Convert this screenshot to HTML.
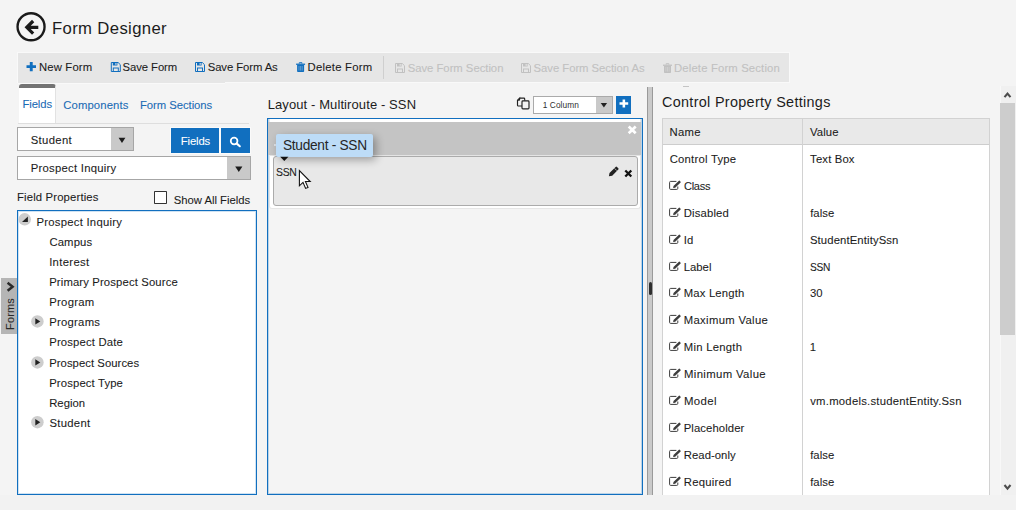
<!DOCTYPE html><html><head><meta charset="utf-8"><title>Form Designer</title><style>
html,body{margin:0;padding:0}
body{width:1016px;height:510px;overflow:hidden;position:relative;background:#f4f4f4;font-family:"Liberation Sans",sans-serif;color:#1c1c1c}
.t{position:absolute;white-space:nowrap;line-height:1;-webkit-text-stroke:0.08px currentColor}
</style></head><body>
<svg style="position:absolute;left:15px;top:11px;overflow:visible" width="33" height="33" viewBox="0 0 33 33" ><g transform="translate(0.000 0.000) scale(1.0000 1.0000)"><circle cx="16.05" cy="15.75" r="13.5" fill="none" stroke="#1a1a1a" stroke-width="2.35"/><path d="M23.3 16.35 H12.5 M18.15 10.0 L11.8 16.35 L18.15 22.7" fill="none" stroke="#1a1a1a" stroke-width="3.2" stroke-linecap="butt" stroke-linejoin="miter"/></g></svg>
<div style="position:absolute;left:18px;top:53px;width:771px;height:29px;background:#e6e6e6;box-shadow:0 0 0 1px rgba(255,255,255,0.45)"></div>
<div style="position:absolute;left:18px;top:82px;width:207px;height:1px;background:#e6e6e6;box-shadow:0 1px 0 0 rgba(255,255,255,0.45)"></div>
<svg style="position:absolute;left:26px;top:62px;overflow:visible" width="11" height="11" viewBox="0 0 11 11" ><g transform="translate(0.500 0.000) scale(1.0000 1.0000)"><path d="M4.75 0 V9.2 M0 4.6 H9.5" stroke="#116fbf" stroke-width="2.9"/></g></svg>
<svg style="position:absolute;left:110px;top:62px;overflow:visible" width="12" height="11" viewBox="0 0 12 11" ><g transform="translate(0.800 0.000) scale(1.0000 1.0000)"><path d="M0.5 0.5 H7.3 L9.5 2.7 V9.5 H0.5 Z" fill="none" stroke="#116fbf" stroke-width="1"/><rect x="2" y="0.5" width="4.6" height="3" fill="#116fbf"/><rect x="4.6" y="1" width="1.1" height="1.8" fill="#e6e6e6"/><rect x="2.5" y="6" width="5" height="3.5" fill="none" stroke="#116fbf" stroke-width="1"/></g></svg>
<svg style="position:absolute;left:195px;top:62px;overflow:visible" width="11" height="11" viewBox="0 0 11 11" ><g transform="translate(0.000 0.000) scale(1.0000 1.0000)"><path d="M0.5 0.5 H7.3 L9.5 2.7 V9.5 H0.5 Z" fill="none" stroke="#116fbf" stroke-width="1"/><rect x="2" y="0.5" width="4.6" height="3" fill="#116fbf"/><rect x="4.6" y="1" width="1.1" height="1.8" fill="#e6e6e6"/><rect x="2.5" y="6" width="5" height="3.5" fill="none" stroke="#116fbf" stroke-width="1"/></g></svg>
<svg style="position:absolute;left:296px;top:62px;overflow:visible" width="11" height="11" viewBox="0 0 11 11" ><g transform="translate(0.100 0.000) scale(1.0000 1.0000)"><path d="M3.2 1.6 V0.6 H5.8 V1.6" fill="none" stroke="#116fbf" stroke-width="0.9"/><rect x="0" y="1.6" width="9" height="1.3" fill="#116fbf"/><path d="M1 2.9 H8 V9.2 Q8 10 7.2 10 H1.8 Q1 10 1 9.2 Z" fill="#116fbf"/><path d="M2.9 4 V8.6 M4.5 4 V8.6 M6.1 4 V8.6" stroke="#e6e6e6" stroke-width="0.55" opacity="0.7"/></g></svg>
<div style="position:absolute;left:383.3px;top:56px;width:1px;height:22.5px;background:#cfcfcf"></div>
<svg style="position:absolute;left:395px;top:63px;overflow:visible" width="11" height="11" viewBox="0 0 11 11" ><g transform="translate(0.000 0.000) scale(1.0000 1.0000)"><path d="M0.5 0.5 H7.3 L9.5 2.7 V9.5 H0.5 Z" fill="none" stroke="#c1c1c1" stroke-width="1"/><rect x="2" y="0.5" width="4.6" height="3" fill="#c1c1c1"/><rect x="4.6" y="1" width="1.1" height="1.8" fill="#e6e6e6"/><rect x="2.5" y="6" width="5" height="3.5" fill="none" stroke="#c1c1c1" stroke-width="1"/></g></svg>
<svg style="position:absolute;left:521px;top:63px;overflow:visible" width="11" height="11" viewBox="0 0 11 11" ><g transform="translate(0.000 0.000) scale(1.0000 1.0000)"><path d="M0.5 0.5 H7.3 L9.5 2.7 V9.5 H0.5 Z" fill="none" stroke="#c1c1c1" stroke-width="1"/><rect x="2" y="0.5" width="4.6" height="3" fill="#c1c1c1"/><rect x="4.6" y="1" width="1.1" height="1.8" fill="#e6e6e6"/><rect x="2.5" y="6" width="5" height="3.5" fill="none" stroke="#c1c1c1" stroke-width="1"/></g></svg>
<svg style="position:absolute;left:663px;top:63px;overflow:visible" width="10" height="11" viewBox="0 0 10 11" ><g transform="translate(0.000 0.000) scale(1.0000 1.0000)"><path d="M3.2 1.6 V0.6 H5.8 V1.6" fill="none" stroke="#c1c1c1" stroke-width="0.9"/><rect x="0" y="1.6" width="9" height="1.3" fill="#c1c1c1"/><path d="M1 2.9 H8 V9.2 Q8 10 7.2 10 H1.8 Q1 10 1 9.2 Z" fill="#c1c1c1"/><path d="M2.9 4 V8.6 M4.5 4 V8.6 M6.1 4 V8.6" stroke="#e6e6e6" stroke-width="0.55" opacity="0.7"/></g></svg>
<div style="position:absolute;left:18px;top:123px;width:231px;height:1px;background:#dedede"></div>
<div style="position:absolute;left:19px;top:84px;width:37px;height:39px;background:#fff;border-top:4px solid #737373;border-radius:3px 3px 0 0;box-sizing:border-box;border-right:1px solid #e2e2e2"></div>
<div style="position:absolute;left:17px;top:127px;width:117px;height:24px;background:#fff;border:1px solid #a6a6a6;box-sizing:border-box"></div>
<div style="position:absolute;left:111px;top:128px;width:22px;height:22px;background:#c9c9c9"></div>
<svg style="position:absolute;left:118px;top:137px;overflow:visible" width="9" height="8" viewBox="0 0 9 8" ><g transform="translate(0.600 0.800) scale(1.0000 1.0000)"><path d="M0 0 H6.8 L3.4 5.2 Z" fill="#1c1c1c"/></g></svg>
<div style="position:absolute;left:171px;top:128px;width:48px;height:25px;background:#116fbf;box-shadow:0 0 0 1px rgba(255,255,255,0.5)"></div>
<div style="position:absolute;left:221px;top:128px;width:29px;height:25px;background:#116fbf;box-shadow:0 0 0 1px rgba(255,255,255,0.5)"></div>
<svg style="position:absolute;left:229px;top:136px;overflow:visible" width="14" height="13" viewBox="0 0 14 13" ><g transform="translate(0.000 0.000) scale(1.0000 1.0000)"><circle cx="5.1" cy="4.9" r="3.35" fill="none" stroke="#fff" stroke-width="1.75"/><path d="M7.8 7.6 L10.8 10.2" stroke="#fff" stroke-width="2.1" stroke-linecap="round"/></g></svg>
<div style="position:absolute;left:17px;top:156px;width:234px;height:24px;background:#fff;border:1px solid #a6a6a6;box-sizing:border-box"></div>
<div style="position:absolute;left:227px;top:157px;width:23px;height:22px;background:#c9c9c9"></div>
<svg style="position:absolute;left:235px;top:166px;overflow:visible" width="9" height="7" viewBox="0 0 9 7" ><g transform="translate(0.200 0.600) scale(1.0000 1.0000)"><path d="M0 0 H7.2 L3.6 5.4 Z" fill="#1c1c1c"/></g></svg>
<div style="position:absolute;left:153.8px;top:191.2px;width:13.2px;height:13.1px;background:#fff;border:1px solid #333;border-radius:0.8px;box-sizing:border-box"></div>
<div style="position:absolute;left:17px;top:210px;width:240px;height:284.6px;background:#fff;border:1px solid #116fbf;box-sizing:border-box;box-shadow:inset 0 0 0 1px rgba(17,111,191,0.2)"></div>
<svg style="position:absolute;left:18px;top:212px;overflow:visible" width="15" height="15" viewBox="0 0 15 15" ><g transform="translate(0.300 0.900) scale(1.0000 1.0000)"><circle cx="6.4" cy="6.4" r="6.25" fill="#cdcdcd"/><path d="M9.6 3.7 V9.0 H3.7 Z" fill="#222"/></g></svg>
<svg style="position:absolute;left:31px;top:315px;overflow:visible" width="14" height="14" viewBox="0 0 14 14" ><g transform="translate(0.000 0.000) scale(1.0000 1.0000)"><circle cx="6.4" cy="6.4" r="6.25" fill="#cdcdcd"/><path d="M4.3 3.2 L9.3 6.4 L4.3 9.6 Z" fill="#222"/></g></svg>
<svg style="position:absolute;left:31px;top:356px;overflow:visible" width="14" height="14" viewBox="0 0 14 14" ><g transform="translate(0.000 0.000) scale(1.0000 1.0000)"><circle cx="6.4" cy="6.4" r="6.25" fill="#cdcdcd"/><path d="M4.3 3.2 L9.3 6.4 L4.3 9.6 Z" fill="#222"/></g></svg>
<svg style="position:absolute;left:31px;top:415px;overflow:visible" width="14" height="15" viewBox="0 0 14 15" ><g transform="translate(0.000 0.800) scale(1.0000 1.0000)"><circle cx="6.4" cy="6.4" r="6.25" fill="#cdcdcd"/><path d="M4.3 3.2 L9.3 6.4 L4.3 9.6 Z" fill="#222"/></g></svg>
<div style="position:absolute;left:1px;top:278.2px;width:16px;height:55.6px;background:#b5b5b5"></div>
<svg style="position:absolute;left:6px;top:281px;overflow:visible" width="10" height="12" viewBox="0 0 10 12" ><g transform="translate(0.000 0.500) scale(1.0000 1.0000)"><path d="M1.6 1.2 L6.6 5.25 L1.6 9.3" fill="none" stroke="#2a2a2a" stroke-width="2.5"/></g></svg>
<svg style="position:absolute;left:517px;top:97px;overflow:visible" width="14" height="14" viewBox="0 0 14 14" ><g transform="translate(0.000 0.400) scale(1.0000 1.0000)"><path d="M2.6 0.7 H6.9 Q7.7 0.7 7.7 1.5 V3.4 M5.0 8.6 H1.3 Q0.5 8.6 0.5 7.8 V2.8 L2.6 0.7 V2.2 Q2.6 2.8 2.0 2.8 H0.6" fill="none" stroke="#222" stroke-width="1.15"/><rect x="5.0" y="3.4" width="7.0" height="8.0" rx="0.9" fill="#f4f4f4" stroke="#222" stroke-width="1.15"/></g></svg>
<div style="position:absolute;left:533px;top:95.9px;width:79.8px;height:17.9px;background:#fff;border:1px solid #aaa;box-sizing:border-box"></div>
<div style="position:absolute;left:596.3px;top:96.9px;width:15.5px;height:15.9px;background:#c9c9c9"></div>
<svg style="position:absolute;left:600px;top:103px;overflow:visible" width="9" height="6" viewBox="0 0 9 6" ><g transform="translate(0.700 0.000) scale(1.0000 1.0000)"><path d="M0 0 H6.4 L3.2 4.5 Z" fill="#222"/></g></svg>
<div style="position:absolute;left:616.1px;top:95.9px;width:14.8px;height:17.9px;background:#116fbf"></div>
<svg style="position:absolute;left:619px;top:99px;overflow:visible" width="11" height="10" viewBox="0 0 11 10" ><g transform="translate(0.500 0.400) scale(1.0000 1.0000)"><path d="M4.35 0 V8.1 M0 4.05 H8.7" stroke="#fff" stroke-width="2.55"/></g></svg>
<div style="position:absolute;left:267px;top:118px;width:376px;height:376.6px;border:1px solid #116fbf;box-sizing:border-box;background:#f4f4f4;box-shadow:inset 0 0 0 1px rgba(17,111,191,0.25)"></div>
<div style="position:absolute;left:269px;top:119.4px;width:372.4px;height:90px;background:#fff;border:1px solid #e6e6e6;border-top:none;border-radius:0 0 3px 3px;box-sizing:border-box"></div>
<div style="position:absolute;left:268px;top:122px;width:373px;height:33px;background:#c4c4c4"></div>
<div style="position:absolute;left:270px;top:155px;width:371px;height:1px;background:#e4e4e4"></div>
<div style="position:absolute;left:273px;top:155.7px;width:365.2px;height:50px;background:#e8e8e8;border:1px solid #ababab;border-radius:3px;box-sizing:border-box"></div>
<svg style="position:absolute;left:627px;top:125px;overflow:visible" width="11" height="11" viewBox="0 0 11 11" ><g transform="translate(0.600 0.500) scale(1.0000 1.0000)"><path d="M1.1 1.0 L8.1 7.8 M8.1 1.0 L1.1 7.8" stroke="#fff" stroke-width="2.7"/></g></svg>
<svg style="position:absolute;left:608px;top:166px;overflow:visible" width="13" height="12" viewBox="0 0 13 12" ><g transform="translate(0.600 0.200) scale(1.0000 1.0000)"><path d="M0.3 10 L0.9 6.8 L7 0.7 Q7.7 0 8.4 0.7 L9.7 2 Q10.4 2.7 9.7 3.4 L3.6 9.5 Z" fill="#222"/><path d="M6 2.2 L8.2 4.4" stroke="#e8e8e8" stroke-width="0.7"/></g></svg>
<svg style="position:absolute;left:624px;top:169px;overflow:visible" width="10" height="10" viewBox="0 0 10 10" ><g transform="translate(0.200 0.400) scale(1.0000 1.0000)"><path d="M1.1 1.1 L7.1 7.1 M7.1 1.1 L1.1 7.1" stroke="#111" stroke-width="2.3"/></g></svg>
<div style="position:absolute;left:274px;top:144px;width:2px;height:2.4px;background:#e9eef3;border-radius:1px"></div>
<div style="position:absolute;left:275.8px;top:134px;width:97.2px;height:22.8px;background:#bddcf7;border-radius:2px;box-shadow:3px 3px 8px rgba(0,0,0,0.32)"></div>
<svg style="position:absolute;left:280px;top:156px;overflow:visible" width="10" height="7" viewBox="0 0 10 7" ><g transform="translate(0.200 0.800) scale(1.0000 1.0000)"><path d="M0 0 H8.2 L4.1 4.2 Z" fill="#111"/></g></svg>
<svg style="position:absolute;left:298px;top:169px;overflow:visible" width="15" height="22" viewBox="0 0 15 22" ><g transform="translate(0.400 0.600) scale(1.0000 1.0000)"><path d="M1 1 V16.2 L4.6 12.8 L7.2 18.8 L9.6 17.8 L7 11.9 H11.8 Z" fill="#fff" stroke="#111" stroke-width="1.1" stroke-linejoin="miter"/></g></svg>
<div style="position:absolute;left:647px;top:87px;width:6px;height:408px;background:#cacaca;border-left:1px solid #9a9a9a;border-right:1px solid #9a9a9a;box-sizing:border-box"></div>
<div style="position:absolute;left:649px;top:282.2px;width:3px;height:12.8px;background:#2e2e2e;border-radius:1.5px"></div>
<div style="position:absolute;left:683px;top:86px;width:6px;height:1px;background:#c4c4c4"></div>
<div style="position:absolute;left:662px;top:118px;width:328px;height:377px;background:#fff;border:1px solid #d2d2d2;border-bottom:none;box-sizing:border-box"></div>
<div style="position:absolute;left:663px;top:119px;width:326px;height:25px;background:#e9e9e9;border-bottom:1px solid #cdcdcd"></div>
<div style="position:absolute;left:802px;top:119px;width:1px;height:376px;background:#d2d2d2"></div>
<svg style="position:absolute;left:669px;top:180px;overflow:visible" width="13" height="11" viewBox="0 0 13 11" ><g transform="translate(0.000 0.500) scale(1.0000 1.0000)"><path d="M7.4 0.9 H1.6 Q0.6 0.9 0.6 1.9 V7.9 Q0.6 8.9 1.6 8.9 H7.8 Q8.8 8.9 8.8 7.9 V6.0" fill="none" stroke="#3d3d3d" stroke-width="1.0"/><path d="M4.1 7.5 L4.5 5.6 L9.9 0.2 Q10.3 -0.1 10.7 0.3 L11.6 1.2 Q11.9 1.6 11.6 2.0 L6.2 7.2 Z" fill="#3d3d3d"/></g></svg>
<svg style="position:absolute;left:669px;top:207px;overflow:visible" width="13" height="11" viewBox="0 0 13 11" ><g transform="translate(0.000 0.500) scale(1.0000 1.0000)"><path d="M7.4 0.9 H1.6 Q0.6 0.9 0.6 1.9 V7.9 Q0.6 8.9 1.6 8.9 H7.8 Q8.8 8.9 8.8 7.9 V6.0" fill="none" stroke="#3d3d3d" stroke-width="1.0"/><path d="M4.1 7.5 L4.5 5.6 L9.9 0.2 Q10.3 -0.1 10.7 0.3 L11.6 1.2 Q11.9 1.6 11.6 2.0 L6.2 7.2 Z" fill="#3d3d3d"/></g></svg>
<svg style="position:absolute;left:669px;top:234px;overflow:visible" width="13" height="11" viewBox="0 0 13 11" ><g transform="translate(0.000 0.500) scale(1.0000 1.0000)"><path d="M7.4 0.9 H1.6 Q0.6 0.9 0.6 1.9 V7.9 Q0.6 8.9 1.6 8.9 H7.8 Q8.8 8.9 8.8 7.9 V6.0" fill="none" stroke="#3d3d3d" stroke-width="1.0"/><path d="M4.1 7.5 L4.5 5.6 L9.9 0.2 Q10.3 -0.1 10.7 0.3 L11.6 1.2 Q11.9 1.6 11.6 2.0 L6.2 7.2 Z" fill="#3d3d3d"/></g></svg>
<svg style="position:absolute;left:669px;top:261px;overflow:visible" width="13" height="11" viewBox="0 0 13 11" ><g transform="translate(0.000 0.500) scale(1.0000 1.0000)"><path d="M7.4 0.9 H1.6 Q0.6 0.9 0.6 1.9 V7.9 Q0.6 8.9 1.6 8.9 H7.8 Q8.8 8.9 8.8 7.9 V6.0" fill="none" stroke="#3d3d3d" stroke-width="1.0"/><path d="M4.1 7.5 L4.5 5.6 L9.9 0.2 Q10.3 -0.1 10.7 0.3 L11.6 1.2 Q11.9 1.6 11.6 2.0 L6.2 7.2 Z" fill="#3d3d3d"/></g></svg>
<svg style="position:absolute;left:669px;top:287px;overflow:visible" width="13" height="11" viewBox="0 0 13 11" ><g transform="translate(0.000 0.500) scale(1.0000 1.0000)"><path d="M7.4 0.9 H1.6 Q0.6 0.9 0.6 1.9 V7.9 Q0.6 8.9 1.6 8.9 H7.8 Q8.8 8.9 8.8 7.9 V6.0" fill="none" stroke="#3d3d3d" stroke-width="1.0"/><path d="M4.1 7.5 L4.5 5.6 L9.9 0.2 Q10.3 -0.1 10.7 0.3 L11.6 1.2 Q11.9 1.6 11.6 2.0 L6.2 7.2 Z" fill="#3d3d3d"/></g></svg>
<svg style="position:absolute;left:669px;top:314px;overflow:visible" width="13" height="11" viewBox="0 0 13 11" ><g transform="translate(0.000 0.500) scale(1.0000 1.0000)"><path d="M7.4 0.9 H1.6 Q0.6 0.9 0.6 1.9 V7.9 Q0.6 8.9 1.6 8.9 H7.8 Q8.8 8.9 8.8 7.9 V6.0" fill="none" stroke="#3d3d3d" stroke-width="1.0"/><path d="M4.1 7.5 L4.5 5.6 L9.9 0.2 Q10.3 -0.1 10.7 0.3 L11.6 1.2 Q11.9 1.6 11.6 2.0 L6.2 7.2 Z" fill="#3d3d3d"/></g></svg>
<svg style="position:absolute;left:669px;top:341px;overflow:visible" width="13" height="11" viewBox="0 0 13 11" ><g transform="translate(0.000 0.500) scale(1.0000 1.0000)"><path d="M7.4 0.9 H1.6 Q0.6 0.9 0.6 1.9 V7.9 Q0.6 8.9 1.6 8.9 H7.8 Q8.8 8.9 8.8 7.9 V6.0" fill="none" stroke="#3d3d3d" stroke-width="1.0"/><path d="M4.1 7.5 L4.5 5.6 L9.9 0.2 Q10.3 -0.1 10.7 0.3 L11.6 1.2 Q11.9 1.6 11.6 2.0 L6.2 7.2 Z" fill="#3d3d3d"/></g></svg>
<svg style="position:absolute;left:669px;top:368px;overflow:visible" width="13" height="11" viewBox="0 0 13 11" ><g transform="translate(0.000 0.500) scale(1.0000 1.0000)"><path d="M7.4 0.9 H1.6 Q0.6 0.9 0.6 1.9 V7.9 Q0.6 8.9 1.6 8.9 H7.8 Q8.8 8.9 8.8 7.9 V6.0" fill="none" stroke="#3d3d3d" stroke-width="1.0"/><path d="M4.1 7.5 L4.5 5.6 L9.9 0.2 Q10.3 -0.1 10.7 0.3 L11.6 1.2 Q11.9 1.6 11.6 2.0 L6.2 7.2 Z" fill="#3d3d3d"/></g></svg>
<svg style="position:absolute;left:669px;top:395px;overflow:visible" width="13" height="11" viewBox="0 0 13 11" ><g transform="translate(0.000 0.500) scale(1.0000 1.0000)"><path d="M7.4 0.9 H1.6 Q0.6 0.9 0.6 1.9 V7.9 Q0.6 8.9 1.6 8.9 H7.8 Q8.8 8.9 8.8 7.9 V6.0" fill="none" stroke="#3d3d3d" stroke-width="1.0"/><path d="M4.1 7.5 L4.5 5.6 L9.9 0.2 Q10.3 -0.1 10.7 0.3 L11.6 1.2 Q11.9 1.6 11.6 2.0 L6.2 7.2 Z" fill="#3d3d3d"/></g></svg>
<svg style="position:absolute;left:669px;top:422px;overflow:visible" width="13" height="11" viewBox="0 0 13 11" ><g transform="translate(0.000 0.500) scale(1.0000 1.0000)"><path d="M7.4 0.9 H1.6 Q0.6 0.9 0.6 1.9 V7.9 Q0.6 8.9 1.6 8.9 H7.8 Q8.8 8.9 8.8 7.9 V6.0" fill="none" stroke="#3d3d3d" stroke-width="1.0"/><path d="M4.1 7.5 L4.5 5.6 L9.9 0.2 Q10.3 -0.1 10.7 0.3 L11.6 1.2 Q11.9 1.6 11.6 2.0 L6.2 7.2 Z" fill="#3d3d3d"/></g></svg>
<svg style="position:absolute;left:669px;top:449px;overflow:visible" width="13" height="11" viewBox="0 0 13 11" ><g transform="translate(0.000 0.500) scale(1.0000 1.0000)"><path d="M7.4 0.9 H1.6 Q0.6 0.9 0.6 1.9 V7.9 Q0.6 8.9 1.6 8.9 H7.8 Q8.8 8.9 8.8 7.9 V6.0" fill="none" stroke="#3d3d3d" stroke-width="1.0"/><path d="M4.1 7.5 L4.5 5.6 L9.9 0.2 Q10.3 -0.1 10.7 0.3 L11.6 1.2 Q11.9 1.6 11.6 2.0 L6.2 7.2 Z" fill="#3d3d3d"/></g></svg>
<svg style="position:absolute;left:669px;top:476px;overflow:visible" width="13" height="11" viewBox="0 0 13 11" ><g transform="translate(0.000 0.500) scale(1.0000 1.0000)"><path d="M7.4 0.9 H1.6 Q0.6 0.9 0.6 1.9 V7.9 Q0.6 8.9 1.6 8.9 H7.8 Q8.8 8.9 8.8 7.9 V6.0" fill="none" stroke="#3d3d3d" stroke-width="1.0"/><path d="M4.1 7.5 L4.5 5.6 L9.9 0.2 Q10.3 -0.1 10.7 0.3 L11.6 1.2 Q11.9 1.6 11.6 2.0 L6.2 7.2 Z" fill="#3d3d3d"/></g></svg>
<div style="position:absolute;left:1000px;top:86px;width:16px;height:409px;background:#f0f0f0;border-left:1px solid #f8f8f8;box-sizing:border-box"></div>
<div style="position:absolute;left:1000px;top:103px;width:15px;height:232px;background:#cdcdcd"></div>
<svg style="position:absolute;left:1003px;top:91px;overflow:visible" width="10" height="9" viewBox="0 0 10 9" ><g transform="translate(0.600 0.600) scale(1.0000 1.0000)"><path d="M0.9 5.6 L3.9 2.0 L6.9 5.6" fill="none" stroke="#4d4d4d" stroke-width="2.1"/></g></svg>
<svg style="position:absolute;left:1003px;top:484px;overflow:visible" width="10" height="8" viewBox="0 0 10 8" ><g transform="translate(0.600 0.000) scale(1.0000 1.0000)"><path d="M0.9 1.0 L3.9 4.6 L6.9 1.0" fill="none" stroke="#4d4d4d" stroke-width="2.1"/></g></svg>
<div style="position:absolute;left:0px;top:495px;width:1016px;height:15px;background:#f2f2f2"></div>
<div class="t" id="forms" style="left:10.3px;top:313.6px;font-size:10.9px;letter-spacing:0.22px;transform:translate(-50%,-50%) rotate(-90deg);color:#2a2a2a">Forms</div>
<span class="t" id="t0" style="left:52.06px;top:20.00px;font-size:16.5px;color:#1c1c1c;letter-spacing:0.350px;transform:scaleX(1.0114);transform-origin:0 0;-webkit-text-stroke:0">Form Designer</span>
<span class="t" id="t1" style="left:38.89px;top:62.00px;font-size:11.3px;color:#1c1c1c;letter-spacing:0.177px">New Form</span>
<span class="t" id="t2" style="left:122.52px;top:62.00px;font-size:11.3px;color:#1c1c1c;letter-spacing:-0.066px">Save Form</span>
<span class="t" id="t3" style="left:207.72px;top:62.00px;font-size:11.3px;color:#1c1c1c;letter-spacing:-0.082px">Save Form As</span>
<span class="t" id="t4" style="left:307.49px;top:62.00px;font-size:11.3px;color:#1c1c1c;letter-spacing:0.263px">Delete Form</span>
<span class="t" id="t5" style="left:407.72px;top:63.00px;font-size:11.3px;color:#c1c1c1;letter-spacing:-0.023px">Save Form Section</span>
<span class="t" id="t6" style="left:533.52px;top:63.00px;font-size:11.3px;color:#c1c1c1;letter-spacing:-0.029px">Save Form Section As</span>
<span class="t" id="t7" style="left:673.99px;top:63.00px;font-size:11.3px;color:#c1c1c1;letter-spacing:0.159px">Delete Form Section</span>
<span class="t" id="t8" style="left:22.49px;top:99.00px;font-size:11.3px;color:#1a6bb5;letter-spacing:-0.110px">Fields</span>
<span class="t" id="t9" style="left:63.18px;top:100.00px;font-size:11.3px;color:#1a6bb5;letter-spacing:0.134px">Components</span>
<span class="t" id="t10" style="left:139.99px;top:100.00px;font-size:11.3px;color:#1a6bb5;letter-spacing:-0.047px">Form Sections</span>
<span class="t" id="t11" style="left:30.72px;top:135.00px;font-size:11.3px;color:#1c1c1c;letter-spacing:0.350px">Student</span>
<span class="t" id="t12" style="left:30.79px;top:163.00px;font-size:11.3px;color:#1c1c1c;letter-spacing:0.250px">Prospect Inquiry</span>
<span class="t" id="t13" style="left:180.69px;top:136.00px;font-size:11.3px;color:#fff;letter-spacing:-0.110px">Fields</span>
<span class="t" id="t14" style="left:16.99px;top:192.00px;font-size:11.3px;color:#1c1c1c;letter-spacing:0.155px">Field Properties</span>
<span class="t" id="t15" style="left:173.72px;top:195.00px;font-size:11.3px;color:#1c1c1c;letter-spacing:-0.007px">Show All Fields</span>
<span class="t" id="t16" style="left:36.49px;top:217.00px;font-size:11.3px;color:#1c1c1c;letter-spacing:0.250px">Prospect Inquiry</span>
<span class="t" id="t17" style="left:49.38px;top:237.00px;font-size:11.3px;color:#1c1c1c;letter-spacing:0.139px">Campus</span>
<span class="t" id="t18" style="left:49.13px;top:257.00px;font-size:11.3px;color:#1c1c1c;letter-spacing:0.350px">Interest</span>
<span class="t" id="t19" style="left:49.19px;top:277.00px;font-size:11.3px;color:#1c1c1c;letter-spacing:0.134px">Primary Prospect Source</span>
<span class="t" id="t20" style="left:49.19px;top:297.00px;font-size:11.3px;color:#1c1c1c;letter-spacing:0.291px">Program</span>
<span class="t" id="t21" style="left:49.19px;top:317.00px;font-size:11.3px;color:#1c1c1c;letter-spacing:0.262px">Programs</span>
<span class="t" id="t22" style="left:49.19px;top:337.00px;font-size:11.3px;color:#1c1c1c;letter-spacing:0.175px">Prospect Date</span>
<span class="t" id="t23" style="left:49.19px;top:358.00px;font-size:11.3px;color:#1c1c1c;letter-spacing:0.049px">Prospect Sources</span>
<span class="t" id="t24" style="left:49.19px;top:378.00px;font-size:11.3px;color:#1c1c1c;letter-spacing:0.142px">Prospect Type</span>
<span class="t" id="t25" style="left:49.19px;top:398.00px;font-size:11.3px;color:#1c1c1c;letter-spacing:0.018px">Region</span>
<span class="t" id="t26" style="left:49.42px;top:418.00px;font-size:11.3px;color:#1c1c1c;letter-spacing:0.304px">Student</span>
<span class="t" id="t27" style="left:267.66px;top:98.00px;font-size:13px;color:#1c1c1c;letter-spacing:0.101px;-webkit-text-stroke:0">Layout - Multiroute - SSN</span>
<span class="t" id="t28" style="left:542.65px;top:101.00px;font-size:8.3px;color:#2e2e2e;letter-spacing:0.110px;-webkit-text-stroke:0">1 Column</span>
<span class="t" id="t29" style="left:282.85px;top:138.00px;font-size:14px;color:#262626;letter-spacing:-0.300px;transform:scaleX(0.9793);transform-origin:0 0;-webkit-text-stroke:0">Student - SSN</span>
<span class="t" id="t30" style="left:276.22px;top:167.00px;font-size:11.2px;color:#1c1c1c;letter-spacing:-0.300px;transform:scaleX(0.9334);transform-origin:0 0">SSN</span>
<span class="t" id="t31" style="left:662.00px;top:95.00px;font-size:14.4px;color:#1c1c1c;letter-spacing:0.317px;-webkit-text-stroke:0">Control Property Settings</span>
<span class="t" id="t32" style="left:669.49px;top:127.00px;font-size:11.3px;color:#1c1c1c;letter-spacing:0.327px">Name</span>
<span class="t" id="t33" style="left:809.97px;top:127.00px;font-size:11.3px;color:#1c1c1c;letter-spacing:0.109px">Value</span>
<span class="t" id="t34" style="left:669.68px;top:154.00px;font-size:11.3px;color:#1c1c1c;letter-spacing:0.239px">Control Type</span>
<span class="t" id="t35" style="left:810.11px;top:154.00px;font-size:11.3px;color:#1c1c1c;letter-spacing:0.150px">Text Box</span>
<span class="t" id="t36" style="left:683.93px;top:181.00px;font-size:11.3px;color:#1c1c1c;letter-spacing:-0.300px;transform:scaleX(0.9773);transform-origin:0 0">Class</span>
<span class="t" id="t37" style="left:683.74px;top:208.00px;font-size:11.3px;color:#1c1c1c;letter-spacing:0.159px">Disabled</span>
<span class="t" id="t38" style="left:810.16px;top:208.00px;font-size:11.3px;color:#1c1c1c;letter-spacing:0.053px">false</span>
<span class="t" id="t39" style="left:683.68px;top:235.00px;font-size:11.3px;color:#1c1c1c;letter-spacing:0.202px">Id</span>
<span class="t" id="t40" style="left:809.97px;top:235.00px;font-size:11.3px;color:#1c1c1c;letter-spacing:0.114px">StudentEntitySsn</span>
<span class="t" id="t41" style="left:683.74px;top:262.00px;font-size:11.3px;color:#1c1c1c;letter-spacing:0.004px">Label</span>
<span class="t" id="t42" style="left:809.97px;top:262.00px;font-size:11.3px;color:#1c1c1c;letter-spacing:-0.300px;transform:scaleX(0.9024);transform-origin:0 0">SSN</span>
<span class="t" id="t43" style="left:683.74px;top:288.00px;font-size:11.3px;color:#1c1c1c;letter-spacing:0.170px">Max Length</span>
<span class="t" id="t44" style="left:810.01px;top:288.00px;font-size:11.3px;color:#1c1c1c;letter-spacing:-0.066px">30</span>
<span class="t" id="t45" style="left:683.74px;top:315.00px;font-size:11.3px;color:#1c1c1c;letter-spacing:0.330px">Maximum Value</span>
<span class="t" id="t46" style="left:683.74px;top:342.00px;font-size:11.3px;color:#1c1c1c;letter-spacing:0.264px">Min Length</span>
<span class="t" id="t47" style="left:809.78px;top:342.00px;font-size:11.3px;color:#1c1c1c;letter-spacing:0.000px">1</span>
<span class="t" id="t48" style="left:683.74px;top:369.00px;font-size:11.3px;color:#1c1c1c;letter-spacing:0.350px;transform:scaleX(1.0049);transform-origin:0 0">Minimum Value</span>
<span class="t" id="t49" style="left:683.74px;top:396.00px;font-size:11.3px;color:#1c1c1c;letter-spacing:0.350px;transform:scaleX(1.0099);transform-origin:0 0">Model</span>
<span class="t" id="t50" style="left:810.23px;top:396.00px;font-size:11.3px;color:#1c1c1c;letter-spacing:0.248px">vm.models.studentEntity.Ssn</span>
<span class="t" id="t51" style="left:683.74px;top:423.00px;font-size:11.3px;color:#1c1c1c;letter-spacing:0.090px">Placeholder</span>
<span class="t" id="t52" style="left:683.74px;top:450.00px;font-size:11.3px;color:#1c1c1c;letter-spacing:0.056px">Read-only</span>
<span class="t" id="t53" style="left:810.16px;top:450.00px;font-size:11.3px;color:#1c1c1c;letter-spacing:0.053px">false</span>
<span class="t" id="t54" style="left:683.74px;top:477.00px;font-size:11.3px;color:#1c1c1c;letter-spacing:0.240px">Required</span>
<span class="t" id="t55" style="left:810.16px;top:477.00px;font-size:11.3px;color:#1c1c1c;letter-spacing:0.053px">false</span>
</body></html>
